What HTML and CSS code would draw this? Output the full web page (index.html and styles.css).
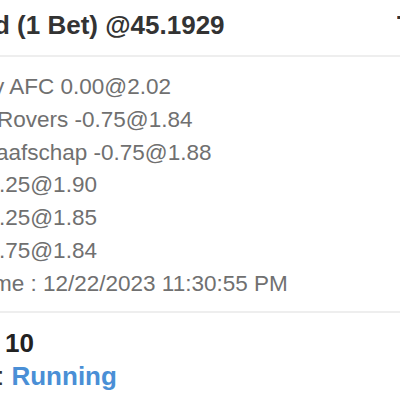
FILE: index.html
```html
<!DOCTYPE html>
<html>
<head>
<meta charset="utf-8">
<link rel="stylesheet" href="styles.css">
</head>
<body>
<div class="card">
  <div class="head">
    <span class="pre">Mixe</span>
    <span class="val s6">d (1 Bet) @45.1929</span>
    <span class="side">Total</span>
  </div>
  <div class="legs">
    <div class="row"><span class="pre">Newport Count</span><span class="val s7">y AFC 0.00@2.02</span></div>
    <div class="row"><span class="pre">Bristol</span><span class="val s3">Rovers -0.75@1.84</span></div>
    <div class="row"><span class="pre">De Gr</span><span class="val s4">aafschap -0.75@1.88</span></div>
    <div class="row"><span class="pre">Over 2</span><span class="val s1">.25@1.90</span></div>
    <div class="row"><span class="pre">Over 2</span><span class="val s1">.25@1.85</span></div>
    <div class="row"><span class="pre">Under 2</span><span class="val s1">.75@1.84</span></div>
    <div class="row"><span class="pre">Match Ti</span><span class="val s7">me : 12/22/2023 11:30:55 PM</span></div>
  </div>
  <div class="foot">
    <div class="row"><span class="pre">Stake :</span><span class="val p5 stake">10</span></div>
    <div class="row"><span class="pre">Status</span><span class="val s3">: <span class="status">Running</span></span></div>
  </div>
</div>
</body>
</html>
```
FILE: styles.css
```css
html, body {
  margin: 0;
  padding: 0;
  background: #ffffff;
  overflow: hidden;
}

.card {
  width: 657px;
  margin-left: -200px;
  font-family: "Liberation Sans", Arial, Helvetica, sans-serif;
}

.row,
.head {
  display: grid;
  grid-template-columns: 200px 1fr;
  white-space: nowrap;
}

.head {
  grid-template-columns: 200px 1fr 60px;
  padding: 10px 0 14px;
  font-size: 26px;
  font-weight: bold;
  line-height: 31px;
  color: #333333;
  border-bottom: 2px solid #eeeeee;
}

.pre {
  text-align: right;
  overflow: hidden;
  padding-right: 12px;
}

.side {
  overflow: hidden;
}

.legs {
  padding: 14px 0 10px;
  font-size: 22.5px;
  line-height: 32.8px;
  color: #707070;
  border-bottom: 2px solid #eeeeee;
}

.foot {
  padding: 14px 0 10px;
  font-size: 26px;
  line-height: 33px;
  color: #333333;
}

.stake {
  font-weight: bold;
  color: #222222;
}

.status {
  font-weight: bold;
  color: #4a8fd6;
}

.s1 { margin-left: -1px; }
.s3 { margin-left: -3px; }
.s4 { margin-left: -4px; }
.s6 { margin-left: -6px; }
.s7 { margin-left: -7px; }
.p5 { margin-left: 5px; }
```
